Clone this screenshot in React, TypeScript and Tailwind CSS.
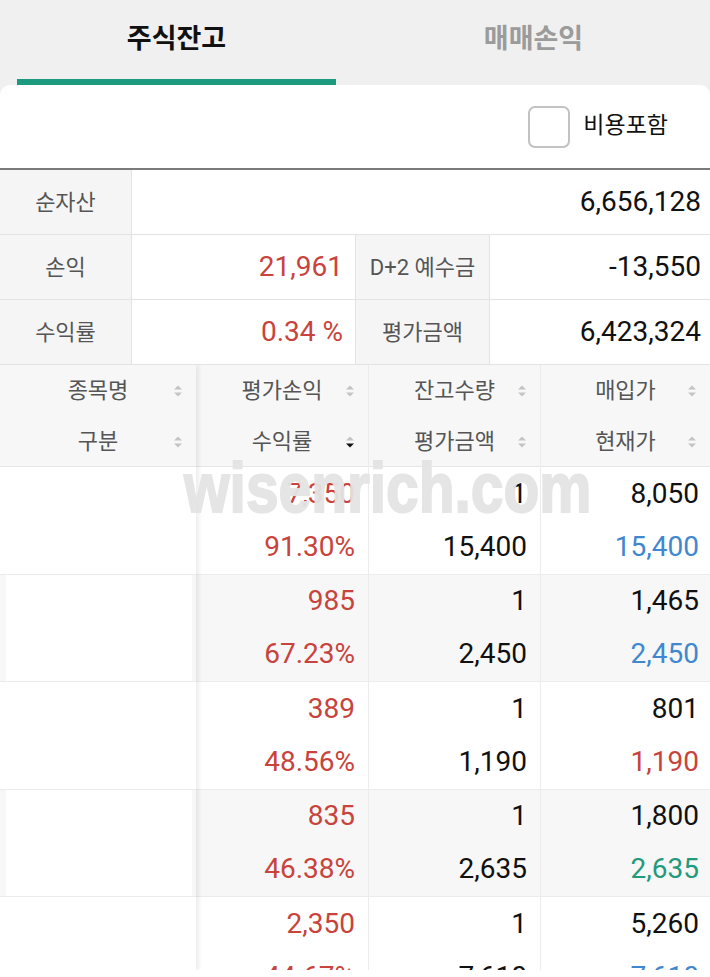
import React from "react";

const FONT = { fontFamily: 'Roboto, "Noto Sans CJK KR", sans-serif' };

function SortIcon({ active }: { active?: boolean }) {
  return (
    <svg width="8" height="13" viewBox="0 0 8 13" className="block">
      <polygon points="0,5 4,1 8,5" fill="#c4c4c4" />
      <polygon points="0,8 8,8 4,12" fill={active ? "#111" : "#c4c4c4"} />
    </svg>
  );
}

function HeadCell({ label, active }: { label: string; active?: boolean }) {
  return (
    <div className="relative h-[51px] flex items-center justify-center text-[22px] text-[#555]">
      <span>{label}</span>
      <span className="absolute right-[14px] top-1/2 -translate-y-1/2">
        <SortIcon active={active} />
      </span>
    </div>
  );
}

type Val = { t: string; c: string };
type Row = { a: Val[]; b: Val[]; c: Val[] };

const RED = "text-[#c8433c]";
const BLK = "text-[#111]";
const BLUE = "text-[#3f88d0]";
const GRN = "text-[#229a7b]";

const rows: Row[] = [
  { a: [{ t: "7,350", c: RED }, { t: "91.30%", c: RED }], b: [{ t: "1", c: BLK }, { t: "15,400", c: BLK }], c: [{ t: "8,050", c: BLK }, { t: "15,400", c: BLUE }] },
  { a: [{ t: "985", c: RED }, { t: "67.23%", c: RED }], b: [{ t: "1", c: BLK }, { t: "2,450", c: BLK }], c: [{ t: "1,465", c: BLK }, { t: "2,450", c: BLUE }] },
  { a: [{ t: "389", c: RED }, { t: "48.56%", c: RED }], b: [{ t: "1", c: BLK }, { t: "1,190", c: BLK }], c: [{ t: "801", c: BLK }, { t: "1,190", c: RED }] },
  { a: [{ t: "835", c: RED }, { t: "46.38%", c: RED }], b: [{ t: "1", c: BLK }, { t: "2,635", c: BLK }], c: [{ t: "1,800", c: BLK }, { t: "2,635", c: GRN }] },
  { a: [{ t: "2,350", c: RED }, { t: "44.67%", c: RED }], b: [{ t: "1", c: BLK }, { t: "7,610", c: BLK }], c: [{ t: "5,260", c: BLK }, { t: "7,610", c: BLUE }] },
];

function DataCell({ vals, pr, last }: { vals: Val[]; pr: string; last?: boolean }) {
  return (
    <div className={`flex flex-col ${last ? "" : "border-r border-[#ececec]"}`}>
      {vals.map((v, i) => (
        <div key={i} className={`h-[53px] flex items-center justify-end text-[28px] ${pr} ${v.c}`}>
          {v.t}
        </div>
      ))}
    </div>
  );
}

export default function App() {
  return (
    <div className="relative w-[710px] h-[977px] overflow-hidden bg-white" style={FONT}>
      {/* Tabs */}
      <div className="bg-[#f0f0f0] h-[85px] flex justify-between px-[17px]">
        <div className="w-[319px] flex flex-col">
          <div className="flex-1 flex items-center justify-center text-[27px] font-bold text-[#111]">주식잔고</div>
          <div className="h-[6px] bg-[#1b9a80]" />
        </div>
        <div className="w-[319px] flex flex-col">
          <div className="flex-1 flex items-center justify-center text-[27px] font-bold text-[#9b9b9b]">매매손익</div>
          <div className="h-[6px]" />
        </div>
      </div>

      {/* White panel */}
      <div className="bg-[#f0f0f0]">
        <div className="bg-white rounded-t-[10px]">
          <div className="h-[83px] flex items-center justify-end pr-[42px]">
            <div className="w-[42px] h-[42px] rounded-[7px] border-2 border-[#c2c2c2] bg-white" />
            <span className="ml-[13px] text-[23px] text-[#111]">비용포함</span>
          </div>

          {/* Summary table */}
          <div className="border-t-2 border-[#7a7a7a]">
            <div className="flex h-[65px] border-b border-[#e3e3e3]">
              <div className="w-[132px] bg-[#f5f5f5] border-r border-[#e3e3e3] flex items-center justify-center text-[22px] text-[#555]">순자산</div>
              <div className="flex-1 flex items-center justify-end pr-[9px] text-[28px] text-[#111]">6,656,128</div>
            </div>
            <div className="flex h-[65px] border-b border-[#e3e3e3]">
              <div className="w-[132px] bg-[#f5f5f5] border-r border-[#e3e3e3] flex items-center justify-center text-[22px] text-[#555]">손익</div>
              <div className="w-[224px] border-r border-[#e3e3e3] flex items-center justify-end pr-[12px] text-[28px] text-[#c8433c]">21,961</div>
              <div className="w-[134px] bg-[#f5f5f5] border-r border-[#e3e3e3] flex items-center justify-center text-[22px] text-[#555]">D+2 예수금</div>
              <div className="flex-1 flex items-center justify-end pr-[9px] text-[28px] text-[#111]">-13,550</div>
            </div>
            <div className="flex h-[65px] border-b border-[#e3e3e3]">
              <div className="w-[132px] bg-[#f5f5f5] border-r border-[#e3e3e3] flex items-center justify-center text-[22px] text-[#555]">수익률</div>
              <div className="w-[224px] border-r border-[#e3e3e3] flex items-center justify-end pr-[12px] text-[28px] text-[#c8433c]">0.34 %</div>
              <div className="w-[134px] bg-[#f5f5f5] border-r border-[#e3e3e3] flex items-center justify-center text-[22px] text-[#555]">평가금액</div>
              <div className="flex-1 flex items-center justify-end pr-[9px] text-[28px] text-[#111]">6,423,324</div>
            </div>
          </div>

          {/* Stock table */}
          <div className="flex h-[605px] overflow-hidden">
            {/* Fixed first column */}
            <div className="w-[196px] relative z-10 shadow-[3px_0_4px_rgba(0,0,0,0.07)] bg-white">
              <div className="bg-[#f7f7f7] border-b border-[#e6e6e6] h-[102px]">
                <HeadCell label="종목명" />
                <HeadCell label="구분" />
              </div>
              {rows.map((_, i) => (
                <div key={i} className={`h-[107.5px] border-b border-[#ececec] flex ${i % 2 === 1 ? "bg-[#f7f7f7]" : "bg-white"}`}>
                  <div className="flex-1 bg-white ml-[6px] mr-[4px]" />
                </div>
              ))}
            </div>
            {/* Scrolling columns */}
            <div className="flex-1">
              <div className="grid grid-cols-[173px_172px_169px] bg-[#f7f7f7] border-b border-[#e6e6e6] h-[102px]">
                <div className="border-r border-[#ececec]">
                  <HeadCell label="평가손익" />
                  <HeadCell label="수익률" active />
                </div>
                <div className="border-r border-[#ececec]">
                  <HeadCell label="잔고수량" />
                  <HeadCell label="평가금액" />
                </div>
                <div>
                  <HeadCell label="매입가" />
                  <HeadCell label="현재가" />
                </div>
              </div>
              {rows.map((r, i) => (
                <div
                  key={i}
                  className={`grid grid-cols-[173px_172px_169px] h-[107.5px] border-b border-[#ececec] ${i % 2 === 1 ? "bg-[#f7f7f7]" : "bg-white"}`}
                >
                  <DataCell vals={r.a} pr="pr-[13px]" />
                  <DataCell vals={r.b} pr="pr-[13px]" />
                  <DataCell vals={r.c} pr="pr-[11px]" last />
                </div>
              ))}
            </div>
          </div>
        </div>
      </div>

      {/* Watermark */}
      <div
        className="absolute left-[184px] top-[452px] z-20 origin-left scale-x-[0.826] text-[71px] font-bold leading-none whitespace-nowrap text-[#e4e4e4] opacity-95 [-webkit-text-stroke:2px_#e4e4e4] pointer-events-none select-none"
        style={{ fontFamily: '"Liberation Sans", Arial, sans-serif' }}
      >
        wisenrich.com
      </div>
    </div>
  );
}
